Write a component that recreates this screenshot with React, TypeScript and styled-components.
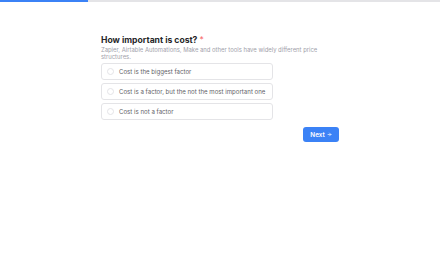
import React from "react";
import styled, { createGlobalStyle } from "styled-components";

const Global = createGlobalStyle`
  html, body { margin: 0; padding: 0; background: #ffffff; }
  body { font-family: Inter, "Noto Sans", sans-serif; }
  * { box-sizing: border-box; }
`;

const Page = styled.div`
  width: 440px;
  height: 275px;
  display: flex;
  flex-direction: column;
`;

const Track = styled.div`
  height: 2px;
  background: #e4e4e7;
  display: flex;
`;

const Fill = styled.div<{ $pct: number }>`
  width: ${(p) => p.$pct}%;
  background: #3b82f6;
`;

const Content = styled.div`
  width: 238px;
  margin: 33px 0 0 101px;
  display: flex;
  flex-direction: column;
`;

const Title = styled.h1`
  margin: 0;
  font-size: 8.6px;
  line-height: 11px;
  font-weight: 700;
  color: #27272a;
`;

const Req = styled.span`
  color: #f87171;
  margin-left: 2px;
  font-weight: 400;
`;

const Sub = styled.p`
  margin: 0;
  font-size: 5.9px;
  line-height: 7px;
  color: #a1a1aa;
`;

const Options = styled.div`
  margin-top: 3px;
  width: 172px;
  display: flex;
  flex-direction: column;
  gap: 3px;
`;

const Option = styled.label`
  height: 17px;
  border: 1px solid #e4e4e7;
  border-radius: 3px;
  display: flex;
  align-items: center;
  padding-left: 5px;
  gap: 5px;
  font-size: 6.1px;
  color: #5f5f68;
`;

const Radio = styled.span`
  width: 7px;
  height: 7px;
  border-radius: 50%;
  border: 1px solid #e4e4e7;
`;

const Footer = styled.div`
  margin-top: 7px;
  display: flex;
  justify-content: flex-end;
`;

const Button = styled.button`
  width: 36px;
  height: 15px;
  border: none;
  border-radius: 3px;
  background: #3b82f6;
  color: #ffffff;
  font-family: Inter, sans-serif;
  font-size: 6.3px;
  font-weight: 600;
  padding: 0;
  display: flex;
  align-items: center;
  justify-content: center;
  gap: 2px;
`;

const opts = [
  "Cost is the biggest factor",
  "Cost is a factor, but the not the most important one",
  "Cost is not a factor",
];

export default function App() {
  return (
    <Page>
      <Global />
      <Track>
        <Fill $pct={20} />
      </Track>
      <Content>
        <Title>
          How important is cost?<Req>*</Req>
        </Title>
        <Sub>
          Zapier, Airtable Automations, Make and other tools have widely different price structures.
        </Sub>
        <Options>
          {opts.map((o) => (
            <Option key={o}>
              <Radio />
              {o}
            </Option>
          ))}
        </Options>
        <Footer>
          <Button>
            Next
            <svg width="5" height="5" viewBox="0 0 24 24" fill="none" stroke="currentColor" strokeWidth="3" strokeLinecap="round" strokeLinejoin="round">
              <path d="M5 12h14M12 5l7 7-7 7" />
            </svg>
          </Button>
        </Footer>
      </Content>
    </Page>
  );
}
